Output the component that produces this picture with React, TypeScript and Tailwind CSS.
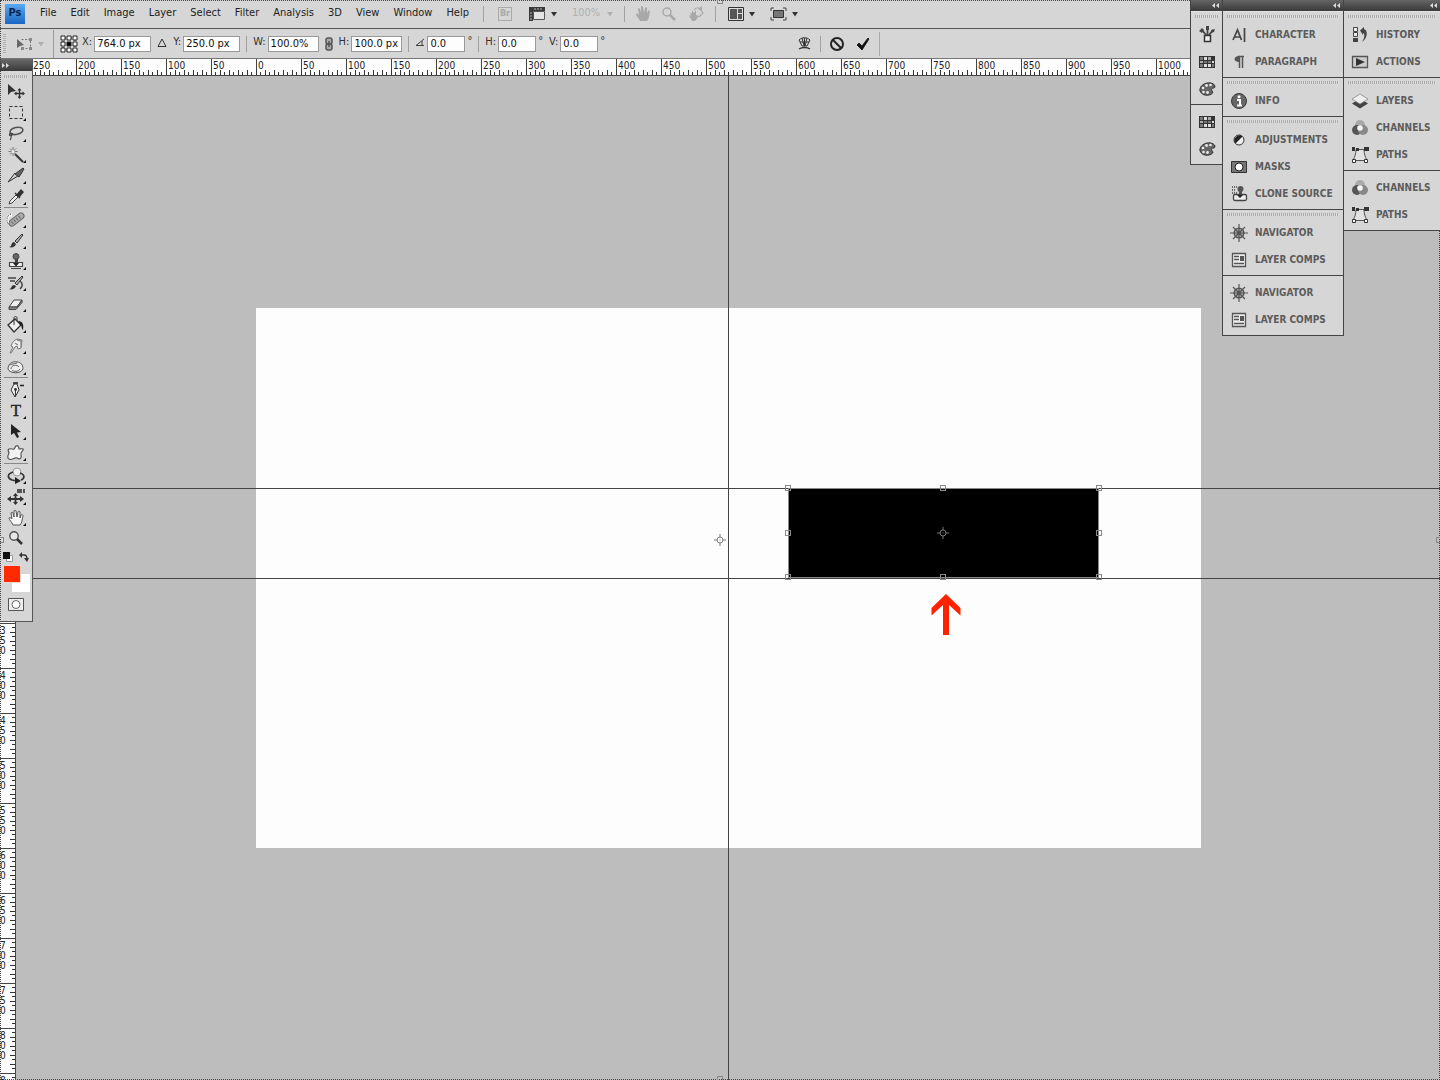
// App.tsx — image editor workspace: menu bar, transform options bar, rulers, toolbox, canvas and panel docks.
import type { ReactNode } from "react";

const MENUS = ["File", "Edit", "Image", "Layer", "Select", "Filter", "Analysis", "3D", "View", "Window", "Help"];

// Document units per major ruler division. At 90% zoom one division is 45px.
const RULER_STEP = 50;

function range(from: number, count: number) {
  return Array.from({ length: count }, (_, i) => Math.abs(from + i * RULER_STEP));
}

type Tool = { name: string; icon: ReactNode; single?: boolean };

const TOOL_GROUPS: Tool[][] = [
  [
    {
      name: "Move",
      single: true,
      icon: (
        <>
          <path d="M3 2v11l3-3 5-1z" fill="#333" />
          <path d="M14.500 7v9M10 11.500h9" stroke="#333" strokeWidth="1.400" />
          <path d="m14.500 6 2 2.500h-4zM14.500 17l2-2.500h-4zM9 11.500l2.500-2v4zM20 11.500l-2.500-2v4z" fill="#333" />
        </>
      ),
    },
    {
      name: "Rectangular Marquee",
      icon: <rect x="4.500" y="3.500" width="13" height="12" fill="none" stroke="#333" strokeDasharray="3 2" />,
    },
    {
      name: "Lasso",
      icon: (
        <>
          <ellipse cx="11.500" cy="7" rx="6.500" ry="3.500" transform="rotate(-12 11 7)" fill="none" stroke="#555" strokeWidth="1.600" />
          <path d="M6 9c-3 1-1 4 1 2s-1-2-1 0 1 3-1 5" fill="none" stroke="#444" strokeWidth="1.200" />
        </>
      ),
    },
    {
      name: "Magic Wand",
      icon: (
        <>
          <path d="m10 9 8 8" stroke="#333" strokeWidth="2" />
          <path d="M8 2v9M3.500 6.500h9M5 3.500l6 6M11 3.500l-6 6" stroke="#777" strokeWidth="1" />
          <circle cx="8" cy="6.500" r="1.500" fill="#eee" />
        </>
      ),
    },
    {
      name: "Slice",
      icon: (
        <>
          <path d="M3 16 10 7l3 3z" fill="#ccc" stroke="#333" />
          <path d="m10 8 8-6 1 1-5 8z" fill="#666" stroke="#333" />
        </>
      ),
    },
    {
      name: "Eyedropper",
      icon: (
        <>
          <path d="m4 17 1-3 6-6 2 2-6 6z" fill="#eee" stroke="#444" />
          <path d="m10 6 5 5M12 8l4-5 2 2-4 5z" fill="#333" stroke="#333" strokeWidth="1.500" />
        </>
      ),
    },
  ],
  [
    {
      name: "Spot Healing Brush",
      icon: (
        <>
          <path d="m7 13 9-7" stroke="#666" strokeWidth="7" strokeLinecap="round" />
          <path d="m7 13 9-7" stroke="#aaa" strokeWidth="5" strokeLinecap="round" />
          <path d="m7 13 9-7" stroke="#666" strokeWidth="3" strokeDasharray="1 2" />
          <path d="M7 5C3 5 1 9 3 13" fill="none" stroke="#fff" strokeWidth="2.500" />
          <path d="M6 4C2 5 1 10 3 14" fill="none" stroke="#333" strokeDasharray="1 1" />
        </>
      ),
    },
    {
      name: "Brush",
      icon: (
        <>
          <path d="m10 10 7-7 1 1-6 8z" fill="#aaa" stroke="#333" />
          <path d="M4 16c3 0 2-5 5-5l2 2c-1 3-4 4-7 3z" fill="#333" />
        </>
      ),
    },
    {
      name: "Clone Stamp",
      icon: (
        <>
          <circle cx="11" cy="4.500" r="3" fill="#666" stroke="#444" />
          <path d="M10 7h3v4h-3z" fill="#444" />
          <path d="M4.500 10.500h13v4h-13zM6 16.500h10" fill="#eee" stroke="#444" strokeWidth="1.200" />
          <path d="M8 11h6l-3 3.500z" fill="#222" />
        </>
      ),
    },
    {
      name: "History Brush",
      icon: (
        <>
          <path d="m10 10 7-7 1 1-6 8z" fill="#aaa" stroke="#333" />
          <path d="M4 16c3 0 2-4 5-4l2 1c-1 3-4 4-7 3z" fill="#333" />
          <path d="M3 5h8M5 8h5M15 8c3 2 3 5 0 8" fill="none" stroke="#444" strokeWidth="1.500" />
        </>
      ),
    },
    {
      name: "Eraser",
      icon: (
        <>
          <path d="m4 13 5-7h8l-5 7z" fill="#eee" stroke="#444" />
          <path d="M4 13v2.500h7l6-7V6l-5 7z" fill="#888" stroke="#444" />
        </>
      ),
    },
    {
      name: "Paint Bucket",
      icon: (
        <>
          <path d="m3 10 7-6 6 6-7 7z" fill="#eee" stroke="#333" strokeWidth="1.300" />
          <path d="M9 10V3c0-2 3-2 3 0v3" fill="none" stroke="#333" />
          <path d="M13 6c5 0 6 4 5 9-2-2-1-5-3-5z" fill="#222" />
        </>
      ),
    },
    {
      name: "Smudge",
      icon: (
        <>
          <path d="m5 17 3-6-2-1c1-3 3-6 6-7l5 1-1 8-3 1-1-3-2 1-4 6z" fill="#f0f0f0" stroke="#777" />
          <path d="m12 4 4 1v6M10 7l3 2" fill="none" stroke="#888" strokeWidth="1.400" />
        </>
      ),
    },
    {
      name: "Sponge",
      icon: (
        <>
          <path d="M3 12c0-5 4-8 9-7 4 0 6 3 6 7-2 5-13 5-15 0z" fill="#eee" stroke="#555" />
          <path d="M6 12c0-4 6-5 8-2M7 13c2 2 6 2 8-1M4 8l8-2" fill="none" stroke="#666" />
        </>
      ),
    },
  ],
  [
    {
      name: "Pen",
      icon: (
        <>
          <path d="m10 17-4-7 3-6h3l2 6z" fill="#eee" stroke="#333" />
          <path d="M10.500 16v-6" stroke="#333" />
          <circle cx="10.500" cy="9.500" r="1.400" fill="#333" />
          <path d="M8 3h5M15 5.500h4" stroke="#222" strokeWidth="1.600" />
        </>
      ),
    },
    {
      name: "Horizontal Type",
      icon: (
        <text x="11" y="15" textAnchor="middle" fontSize="17" fontFamily="Liberation Serif, serif" fill="#222" stroke="#222" strokeWidth="0.300">
          T
        </text>
      ),
    },
    { name: "Path Selection", icon: <path d="M6 2v11l3-2 3 5 2-1-2-4.500 4-.5z" fill="#222" /> },
    {
      name: "Custom Shape",
      icon: (
        <path
          d="M11 3c2-1 3 1 3 3 2 0 5-1 4 1s-3 3-2 5c1 3-1 5-4 3-3-1-5 3-8 1s0-5 0-6-2-3 0-4 4 1 5 0 1-2 2-3z"
          fill="#f2f2f2"
          stroke="#555"
          strokeWidth="1.200"
        />
      ),
    },
  ],
  [
    {
      name: "3D Rotate",
      icon: (
        <>
          <circle cx="12" cy="6" r="4" fill="#eee" stroke="#999" />
          <path d="M8 6c-6 2-6 6-1 8l5 1M15 7c6 2 4 6 1 7" fill="none" stroke="#333" strokeWidth="1.700" />
          <path d="m10 11 6 4-6 3z" fill="#222" />
        </>
      ),
    },
    {
      name: "3D Pan",
      icon: (
        <>
          <path d="M3 12h15M10.500 7v10" stroke="#333" strokeWidth="1.800" />
          <path d="m2 12 4-3v6zM19 12l-4-3v6zM8 9h5l-2.500-3zM8 15h5l-2.500 3z" fill="#333" />
          <path d="M12 2h5v4h-5zM18 2h2v4h-2z" fill="#555" />
        </>
      ),
    },
    {
      name: "Hand",
      icon: (
        <path
          d="M8 17C7 14 4 12 4 10c1-1 2 0 3 1L6 5c0-1 2-1 2 0l1 4V3c0-1 2-1 2 0l1 6 1-5c0-1 2-1 2 0v6l1-3c1-1 2 0 2 1-1 4-1 7-3 9z"
          fill="#f5f5f5"
          stroke="#555"
        />
      ),
    },
    {
      name: "Zoom",
      single: true,
      icon: (
        <>
          <circle cx="9" cy="7" r="4.200" fill="#e8e8e8" stroke="#555" strokeWidth="1.400" />
          <path d="m12 10 5 5" stroke="#333" strokeWidth="2.500" />
        </>
      ),
    },
  ],
];

const ICONS: Record<string, ReactNode> = {
  brushes: (
    <>
      <path d="M6.500 9.500h6v6h-6z" fill="#eee" stroke="#333" strokeWidth="1.500" />
      <path d="M8 9 4 4M9.500 9V3M11 9l4-5" stroke="#444" strokeWidth="1.800" />
      <path d="M1 5l3-3 2 2-2 3zM8 0h3v4H8zM13 4l4-1-1 3-3 1z" fill="#444" />
    </>
  ),
  swatches: (
    <>
      <path d="M1 3h16v12H1z" fill="#333" />
      <path d="M2 4h3v3H2zM6 8h3v2H6zM10 8h3v2h-3zM2 11h3v3H2zM14 11h2v3h-2z" fill="#777" />
      <path d="M6 4h3v3H6zM14 8h2v2h-2zM6 11h3v3H6zM10 11h3v3h-3z" fill="#ddd" />
      <path d="M10 4h3v3h-3zM2 8h3v2H2z" fill="#aaa" />
    </>
  ),
  color: (
    <>
      <path d="M2 11C1 6 7 2 13 3c4 1 5 4 3 5-3 0-3 2-1 4 0 3-10 6-13-1z" fill="#666" stroke="#333" />
      <g fill="#e8e8e8">
        <circle cx="5" cy="8" r="1.300" />
        <circle cx="8.500" cy="5.500" r="1.400" />
        <circle cx="12.500" cy="5" r="1.300" />
        <circle cx="5.500" cy="12" r="1.300" />
        <circle cx="9.500" cy="12.500" r="1.400" />
      </g>
    </>
  ),
  character: <path d="M3 14 7.500 4l4 10M4.500 11h6M14.500 2v14" fill="none" stroke="#444" strokeWidth="1.700" />,
  paragraph: (
    <>
      <path d="M9 3C3 3 3 9 9 9z" fill="#555" />
      <path d="M9.500 3v12M12.500 3v12M8 3.500h6" stroke="#555" strokeWidth="1.500" />
    </>
  ),
  info: (
    <>
      <circle cx="9" cy="9" r="7.500" fill="#666" stroke="#3a3a3a" />
      <path d="M7 8h3v5M7 13.500h5" fill="none" stroke="#fff" strokeWidth="2" />
      <circle cx="9" cy="4.800" r="1.500" fill="#fff" />
    </>
  ),
  adjustments: (
    <>
      <circle cx="9" cy="9" r="5" fill="#eee" stroke="#333" />
      <path d="M5.500 12.500a5 5 0 0 1 7-7z" fill="#222" />
    </>
  ),
  masks: (
    <>
      <path d="M1.500 3.500h15v11h-15z" fill="#777" stroke="#333" />
      <circle cx="9" cy="9" r="4" fill="#fff" stroke="#222" />
    </>
  ),
  clone: (
    <>
      <path d="M2 2h5M2 5h4M2 8h5" stroke="#444" strokeWidth="1.500" strokeDasharray="1 1" />
      <circle cx="10.500" cy="4" r="3" fill="#555" />
      <path d="M9 6h3v4H9z" fill="#555" />
      <rect x="3.500" y="9.500" width="13" height="6" rx="1.500" fill="#eee" stroke="#444" strokeWidth="1.300" />
      <path d="M7 10h6l-3 3z" fill="#222" />
    </>
  ),
  navigator: (
    <>
      <circle cx="9" cy="9" r="4.800" fill="#aaa" stroke="#555" strokeWidth="1.500" />
      <path d="M9 0v18M0 9h18M3 3l12 12M15 3 3 15" stroke="#555" strokeWidth="1.200" />
      <circle cx="9" cy="9" r="2" fill="#555" />
    </>
  ),
  comps: (
    <>
      <path d="M2.500 2.500h13v13h-13z" fill="#eee" stroke="#555" strokeWidth="1.300" />
      <path d="M4 5.500h5M4 8.500h5M4 12.500h10" stroke="#555" strokeWidth="1.300" />
      <path d="M10 5h4v5h-4z" fill="#555" />
    </>
  ),
  history: (
    <>
      <path d="M2.500 1.500h4v4h-4zM2.500 6.500h4v4h-4z" fill="#eee" stroke="#444" />
      <path d="M2 12h5v4H2z" fill="#444" />
      <path d="M9 4.500 13 1v2c4 1 4 9-2 13 3-5 3-8 1-9v2z" fill="#444" />
    </>
  ),
  actions: (
    <>
      <path d="M1.500 3.500h15v11h-15z" fill="#ccc" stroke="#555" strokeWidth="1.300" />
      <path d="m5 5 9 4-9 4z" fill="#333" />
    </>
  ),
  layers: (
    <>
      <path d="m1 11.500 8-5 8 5-8 5z" fill="#444" />
      <path d="m1 7 8-5 8 5-8 5z" fill="#eee" stroke="#888" strokeWidth="0.800" />
    </>
  ),
  channels: (
    <>
      <circle cx="9" cy="6" r="5" fill="#aaa" />
      <circle cx="6" cy="11" r="5" fill="#555" />
      <circle cx="12" cy="11" r="5" fill="#888" />
      <circle cx="9" cy="9" r="2.800" fill="#f5f5f5" />
    </>
  ),
  paths: (
    <>
      <path d="M5 3.500h8c0 4 1 7 3 11H2c2-4 3-7 3-11z" fill="#e2e2e2" stroke="#555" />
      <path d="M1 1h3v4H1zM5 2h3v3H5zM13 1h5v4h-5z" fill="#333" />
      <path d="M1.500 13.500h3v3h-3zM13.500 13.500h3v3h-3z" fill="#fff" stroke="#333" />
    </>
  ),
};

type Panel = { icon: string; label: string };
type PanelGroup = { grip?: boolean; panels: Panel[] };

const ICON_DOCK: PanelGroup[] = [
  {
    grip: true,
    panels: [
      { icon: "brushes", label: "Brushes" },
      { icon: "swatches", label: "Swatches" },
      { icon: "color", label: "Color" },
    ],
  },
  {
    panels: [
      { icon: "swatches", label: "Swatches" },
      { icon: "color", label: "Color" },
    ],
  },
];

const MIDDLE_DOCK: PanelGroup[] = [
  {
    grip: true,
    panels: [
      { icon: "character", label: "CHARACTER" },
      { icon: "paragraph", label: "PARAGRAPH" },
    ],
  },
  { grip: true, panels: [{ icon: "info", label: "INFO" }] },
  {
    grip: true,
    panels: [
      { icon: "adjustments", label: "ADJUSTMENTS" },
      { icon: "masks", label: "MASKS" },
      { icon: "clone", label: "CLONE SOURCE" },
    ],
  },
  {
    grip: true,
    panels: [
      { icon: "navigator", label: "NAVIGATOR" },
      { icon: "comps", label: "LAYER COMPS" },
    ],
  },
  {
    panels: [
      { icon: "navigator", label: "NAVIGATOR" },
      { icon: "comps", label: "LAYER COMPS" },
    ],
  },
];

const RIGHT_DOCK: PanelGroup[] = [
  {
    grip: true,
    panels: [
      { icon: "history", label: "HISTORY" },
      { icon: "actions", label: "ACTIONS" },
    ],
  },
  {
    grip: true,
    panels: [
      { icon: "layers", label: "LAYERS" },
      { icon: "channels", label: "CHANNELS" },
      { icon: "paths", label: "PATHS" },
    ],
  },
  {
    panels: [
      { icon: "channels", label: "CHANNELS" },
      { icon: "paths", label: "PATHS" },
    ],
  },
];

function Caret({ faded }: { faded?: boolean }) {
  return (
    <svg width="8" height="6" viewBox="0 0 8 6" className={faded ? "text-[#b0b0b0]" : "text-[#333]"}>
      <path d="M1 1h6L4 5.500z" fill="currentColor" />
    </svg>
  );
}

function Divider() {
  return <span className="h-4 w-px shrink-0 bg-[#a0a0a0]" />;
}

function MenuBar() {
  return (
    <header className="flex h-[29px] shrink-0 items-center border-b border-[#555] bg-[#d6d6d6] pb-px pl-[5px] text-[11px] text-[#222]">
      <span className="flex size-5 items-center justify-center bg-linear-to-b from-[#5aa9f0] to-[#1b66c4] text-[11px] font-bold text-[#06264f]">
        Ps
      </span>
      <nav className="ml-[15px] flex gap-3.5">
        {MENUS.map((m) => (
          <button key={m} type="button">
            {m}
          </button>
        ))}
      </nav>
      <div className="ml-3.5 flex items-center">
        <Divider />
        <button type="button" aria-label="Launch Bridge" className="ml-3.5 flex size-3.5 items-center justify-center border border-[#aaa] text-[9px] font-bold text-[#aaa]">
          Br
        </button>
        <button type="button" aria-label="View extras" className="ml-4 flex items-center gap-1">
          <svg width="18" height="16" viewBox="0 0 18 16">
            <path d="M1 1h16v4H5v10H1z" fill="#3a3a3a" />
            <path d="M5.500 5.500h11v8h-11z" fill="#e4e4e4" stroke="#555" />
            <path d="M7 2v2M10 2v2M13 2v2M2 7h2M2 10h2M2 13h2" stroke="#bbb" />
          </svg>
          <Caret />
        </button>
        <button type="button" className="ml-3.5 flex items-center gap-1.5 text-[#b0b0b0]">
          100% <Caret faded />
        </button>
        <span className="ml-2.5 flex items-center gap-2.5">
          <Divider />
          <button type="button" aria-label="Hand">
            <svg width="16" height="16" viewBox="3 2 16 16">
              <path d="M8 17C7 14 4 12 4 10c1-1 2 0 3 1L6 5c0-1 2-1 2 0l1 4V3c0-1 2-1 2 0l1 6 1-5c0-1 2-1 2 0v6l1-3c1-1 2 0 2 1-1 4-1 7-3 9z" fill="#a8a8a8" />
            </svg>
          </button>
          <button type="button" aria-label="Zoom">
            <svg width="16" height="16" viewBox="0 0 16 16" fill="none" stroke="#a8a8a8">
              <circle cx="6" cy="6" r="4" strokeWidth="1.500" />
              <path d="m9 9 5 5" strokeWidth="2.500" />
            </svg>
          </button>
          <button type="button" aria-label="Rotate view">
            <svg width="18" height="16" viewBox="0 0 18 16">
              <path d="M5 15C4 12 2 11 2 9l2 1-1-4 2 2V4l2 3 2-3v5l3 1-4 5z" fill="#a8a8a8" />
              <path d="M7 4c2-3 5-3 7 0l2 3-4 4" fill="none" stroke="#a8a8a8" strokeWidth="1.200" />
              <path d="m11 3 4-3v5z" fill="#a8a8a8" />
            </svg>
          </button>
          <Divider />
        </span>
        <button type="button" aria-label="Arrange documents" className="ml-3 flex items-center gap-1">
          <svg width="16" height="14" viewBox="0 0 16 14">
            <path d="M.5.5h15v13H.5z" fill="#ddd" stroke="#333" />
            <path d="M2 2h7v10H2zM10 2h4v4h-4zM10 7h4v5h-4z" fill="#555" />
          </svg>
          <Caret />
        </button>
        <button type="button" aria-label="Screen mode" className="ml-3.5 flex items-center gap-1">
          <svg width="17" height="14" viewBox="0 0 17 14">
            <path d="M1 4V1h3M13 1h3v3M16 10v3h-3M4 13H1v-3" fill="none" stroke="#444" />
            <path d="M3.500 3.500h10v7h-10z" fill="#777" stroke="#333" />
          </svg>
          <Caret />
        </button>
      </div>
    </header>
  );
}

function Field({ id, label, value, width, unit }: { id: string; label: ReactNode; value: string; width: string; unit?: string }) {
  return (
    <div className="flex items-center gap-0.5">
      <label htmlFor={id} className="-mt-0.5 min-w-2">
        {label}
      </label>
      <input id={id} defaultValue={value} className={`h-4 border border-[#999] bg-[#fdfdfd] px-0.5 pt-0.5 text-[#111] outline-none ${width}`} />
      {unit && <span className="-mt-1">{unit}</span>}
    </div>
  );
}

function OptionsBar() {
  return (
    <div className="flex h-[30px] shrink-0 items-center border-b border-[#777] bg-[#d6d6d6] pl-[3px] text-[11px] text-[#333]">
      <span className="h-5 w-[3px] bg-[repeating-linear-gradient(#aaa_0_1px,#ddd_1px_2px)]" />
      <button type="button" aria-label="Tool presets" className="ml-2.5 flex items-center gap-1">
        <svg width="17" height="14" viewBox="0 0 17 14">
          <path d="M5.500 2.500h9v9h-9" fill="none" stroke="#777" strokeDasharray="2 1.500" />
          <path d="M1 2v9l3-2 4-1z" fill="#666" />
          <path d="M13 1h3v3h-3zM13 10h3v3h-3zM5 10h3v3H5z" fill="#888" />
        </svg>
        <Caret faded />
      </button>
      <span className="ml-2 h-7 w-px bg-[#999]" />
      <button type="button" aria-label="Reference point location" className="ml-1.5">
        <svg width="18" height="18" viewBox="0 0 18 18" fill="#fff" stroke="#222">
          <path d="M3 3h12v12H3z" fill="none" strokeDasharray="1 1" />
          <path d="M1 1h4v4H1zM7 1h4v4H7zM13 1h4v4h-4zM1 7h4v4H1zM13 7h4v4h-4zM1 13h4v4H1zM7 13h4v4H7zM13 13h4v4h-4z" />
          <path d="M7 7h4v4H7z" fill="#000" />
        </svg>
      </button>
      <div className="ml-1 flex items-center gap-1.5">
        <Field id="pos-x" label="X:" value="764.0 px" width="w-[57px]" />
        <svg width="10" height="10" viewBox="0 0 10 10" className="-mt-0.5">
          <path d="M1 8.500h8L5 1z" fill="none" stroke="#333" />
        </svg>
        <Field id="pos-y" label="Y:" value="250.0 px" width="w-[57px]" />
        <Divider />
        <Field id="width" label="W:" value="100.0%" width="w-[51px]" />
        <button type="button" aria-label="Maintain aspect ratio">
          <svg width="8" height="14" viewBox="0 0 8 14" fill="none" stroke="#555" strokeWidth="1.500">
            <rect x="1" y="1" width="6" height="6" rx="2" fill="#aaa" />
            <rect x="1" y="7" width="6" height="6" rx="2" fill="#aaa" />
            <path d="M4 4v6" />
          </svg>
        </button>
        <Field id="height" label="H:" value="100.0 px" width="w-[51px]" />
        <Divider />
        <Field
          id="angle"
          label={
            <svg width="10" height="9" viewBox="0 0 10 9" role="img" aria-label="Rotation">
              <path d="M9 1 1 7.500h8M7 3v4" fill="none" stroke="#444" />
            </svg>
          }
          value="0.0"
          width="w-[38px]"
          unit="°"
        />
        <Divider />
        <Field id="skew-h" label="H:" value="0.0" width="w-[38px]" unit="°" />
        <Field id="skew-v" label="V:" value="0.0" width="w-[38px]" unit="°" />
      </div>
      <div className="ml-48 flex items-center gap-2">
        <button type="button" aria-label="Warp">
          <svg width="15" height="15" viewBox="0 0 15 15" fill="none" stroke="#333">
            <path d="M2 4c3-3 8-3 11 0l-3 6H5zM3 6h9M5 2l2 8M10 2 8 10M7.500 2v8" />
            <path d="M2 13c3-2 8-2 11 0" strokeWidth="1.500" />
          </svg>
        </button>
        <Divider />
        <button type="button" aria-label="Cancel transform">
          <svg width="16" height="16" viewBox="0 0 16 16" fill="none" stroke="#222" strokeWidth="2">
            <circle cx="8" cy="8" r="6" />
            <path d="m4 4 8 8" />
          </svg>
        </button>
        <button type="button" aria-label="Commit transform" className="ml-0.5">
          <svg width="16" height="16" viewBox="0 0 16 16">
            <path d="m2 9 2-2 3 3 6-8 1 1-7 11z" fill="#111" stroke="#111" strokeWidth="0.800" />
          </svg>
        </button>
        <span className="h-6 w-px bg-[#aaa]" />
      </div>
    </div>
  );
}

function HorizontalRuler() {
  return (
    <div className="flex h-[17px] shrink-0 overflow-hidden border-b border-[#444] bg-[#fdfdfd] pl-[31px] text-[10px] leading-3 text-[#222]">
      {range(-250, 26).map((n, i) => (
        <div key={i} className="flex w-[45px] shrink-0 flex-col justify-between">
          <span className="h-[11px] border-l border-[#444] pt-px pl-px">{n}</span>
          <svg width="45" height="5" viewBox="0 0 45 5" shapeRendering="crispEdges" className="block">
            <path d="M.5 0v5M9.500 0v5M18.500 0v5M27.500 0v5M36.500 0v5M4.500 2v3M13.500 2v3M22.500 2v3M31.500 2v3M40.500 2v3" stroke="#333" />
          </svg>
        </div>
      ))}
    </div>
  );
}

function VerticalRuler() {
  return (
    <div className="w-4 shrink-0 overflow-hidden border-r border-[#444] bg-[#fdfdfd] pt-[7px] text-[10px] leading-[10px] text-[#222]">
      {range(-250, 23).map((n, i) => (
        <div key={i} className="flex h-[45px] justify-between border-t border-[#444]">
          <span className="flex w-[6px] flex-col pt-0.5">
            {String(n)
              .split("")
              .map((d, j) => (
                <span key={j}>{d}</span>
              ))}
          </span>
          <svg width="5" height="44" viewBox="0 1 5 44" shapeRendering="crispEdges">
            <path d="M0 9.500h5M0 18.500h5M0 27.500h5M0 36.500h5M2 4.500h3M2 13.500h3M2 22.500h3M2 31.500h3M2 40.500h3" stroke="#333" />
          </svg>
        </div>
      ))}
    </div>
  );
}

function Crosshair() {
  return (
    <svg width="12" height="12" viewBox="0 0 12 12" fill="none" stroke="#777">
      <circle cx="6" cy="6" r="3" />
      <path d="M6 0v3M6 9v3M0 6h3M9 6h3M6 5.500v1" />
    </svg>
  );
}

const HANDLE = "absolute size-[6px] border border-[#888]";

function TransformBox() {
  return (
    <div className="absolute top-[180px] left-[532px] h-[90px] w-[311px] border border-[#888] bg-black">
      <span className={`${HANDLE} -top-1 -left-1`} />
      <span className={`${HANDLE} -top-1 left-1/2 -ml-[3px]`} />
      <span className={`${HANDLE} -top-1 -right-1`} />
      <span className={`${HANDLE} top-1/2 -left-1 -mt-[3px]`} />
      <span className={`${HANDLE} top-1/2 -right-1 -mt-[3px]`} />
      <span className={`${HANDLE} -bottom-[3px] -left-1`} />
      <span className={`${HANDLE} -bottom-[3px] left-1/2 -ml-[3px]`} />
      <span className={`${HANDLE} -right-1 -bottom-[3px]`} />
      <span className="absolute inset-0 flex items-center justify-center">
        <Crosshair />
      </span>
    </div>
  );
}

function Workspace() {
  return (
    <main className="relative flex flex-1 items-center justify-center overflow-hidden bg-[#bdbdbd]">
      <div className="relative h-[540px] w-[945px] shrink-0 bg-[#fdfdfd]">
        <svg width="30" height="42" viewBox="0 0 30 42" className="absolute top-[286px] left-[675px]">
          <path d="M15 0 29.500 14v7.500L18 11v30h-6V11L.5 21.500V14z" fill="#ff2200" />
        </svg>
      </div>
      <span className="absolute inset-y-0 left-1/2 w-px bg-[#444]" />
      <span className="absolute inset-x-0 top-1/2 h-px bg-[#444]" />
      <span className="absolute inset-x-0 top-[calc(50%-90px)] h-px bg-[#444]" />
      <div className="absolute h-[540px] w-[945px]">
        <TransformBox />
      </div>
    </main>
  );
}

function Toolbox() {
  return (
    <aside className="absolute top-[59px] left-0 w-[33px] border-r border-b border-[#555] bg-[#d6d6d6] pb-2.5">
      <div className="flex h-3 items-center bg-linear-to-b from-[#6a6a6a] to-[#3a3a3a] pl-0.5">
        <svg width="8" height="5" viewBox="0 0 8 5" fill="#ddd">
          <path d="M0 0l3 2.500L0 5zM4 0l3 2.500L4 5z" />
        </svg>
      </div>
      <div className="flex h-2.5 items-center px-1">
        <span className="h-[3px] w-full bg-[repeating-linear-gradient(90deg,#aaa_0_1px,#ddd_1px_2px)]" />
      </div>
      {TOOL_GROUPS.map((group, i) => (
        <div key={i}>
          {i > 0 && <div className="mx-1 mb-px h-px bg-[#888]" />}
          {group.map((t) => (
            <button key={t.name} type="button" aria-label={t.name} className="flex h-[21px] w-full items-center pl-[5px]">
              <svg width="22" height="20" viewBox="0 0 22 20">
                {t.icon}
                {!t.single && <path d="M21 15v3h-3z" fill="#111" />}
              </svg>
            </button>
          ))}
        </div>
      ))}
      <div className="flex h-[15px] items-center justify-between px-[3px]">
        <button type="button" aria-label="Default colors">
          <svg width="10" height="10" viewBox="0 0 10 10">
            <path d="M3.500 3.500h6v6h-6z" fill="#fff" stroke="#999" />
            <path d="M0 0h7v7H0z" fill="#111" />
          </svg>
        </button>
        <button type="button" aria-label="Switch colors">
          <svg width="10" height="10" viewBox="0 0 10 10">
            <path d="M2 3h3c2 0 3 1 3 4" fill="none" stroke="#333" strokeWidth="1.400" />
            <path d="m0 3 3-3v6zM5 6h5l-2 4z" fill="#333" />
          </svg>
        </button>
      </div>
      <div className="relative h-7">
        <button type="button" aria-label="Background color" className="absolute top-[10px] left-3 size-[18px] bg-white" />
        <button type="button" aria-label="Foreground color" className="absolute top-px left-[3px] size-[18px] border border-[#e8d8d0] bg-[#ff2a00]" />
      </div>
      <button type="button" aria-label="Edit in Quick Mask mode" className="mt-1.5 ml-2 block">
        <svg width="16" height="13" viewBox="0 0 16 13">
          <path d="M.5.5h15v12H.5z" fill="#eee" stroke="#555" />
          <circle cx="8" cy="6.500" r="4" fill="#fff" stroke="#666" />
        </svg>
      </button>
    </aside>
  );
}

function Dock({ groups, width, iconsOnly }: { groups: PanelGroup[]; width: string; iconsOnly?: boolean }) {
  return (
    <section className={`border-l border-[#444] ${width}`}>
      <div className="flex h-3 items-center justify-end border-b border-[#e4e4e4] bg-linear-to-b from-[#666] to-[#3a3a3a] pr-0.5">
        <svg width="8" height="5" viewBox="0 0 8 5" fill="#ddd">
          <path d="M3 0 0 2.500 3 5zM7 0 4 2.500 7 5z" />
        </svg>
      </div>
      {groups.map((g, i) => (
        <div key={i} className={`border-b border-[#444] bg-[#d6d6d6] pb-0.5 ${g.grip ? "" : "pt-[3px]"}`}>
          {g.grip && (
            <div className="flex h-[9px] items-center px-1">
              <span className="h-[3px] w-full bg-[repeating-linear-gradient(90deg,#aaa_0_1px,#ddd_1px_2px)]" />
            </div>
          )}
          {g.panels.map((p) => (
            <button
              key={p.label}
              type="button"
              aria-label={p.label}
              className="flex h-[27px] w-full items-center gap-[7px] pl-[7px] text-[10px] font-bold whitespace-nowrap text-[#5c5c5c]"
            >
              <svg width="18" height="18" viewBox="0 0 18 18" className="shrink-0">
                {ICONS[p.icon]}
              </svg>
              {!iconsOnly && p.label}
            </button>
          ))}
        </div>
      ))}
    </section>
  );
}

// Free-transform bounds of the whole window, with its edge handles and centre point.
function OuterBounds() {
  return (
    <div className="pointer-events-none absolute inset-0 border border-dotted border-[#444]">
      <span className={`${HANDLE} -top-[3px] left-1/2 -ml-[3px]`} />
      <span className={`${HANDLE} -bottom-[3px] left-1/2 -ml-[3px]`} />
      <span className={`${HANDLE} top-1/2 -left-[3px] -mt-[3px]`} />
      <span className={`${HANDLE} top-1/2 -right-[3px] -mt-[3px]`} />
      <span className="absolute inset-0 flex items-center justify-center">
        <Crosshair />
      </span>
    </div>
  );
}

export default function App() {
  return (
    <div className="relative flex h-screen flex-col overflow-hidden bg-[#bdbdbd] font-['DejaVu_Sans_Condensed','Noto_Sans',sans-serif]">
      <MenuBar />
      <OptionsBar />
      <HorizontalRuler />
      <div className="flex min-h-0 flex-1">
        <VerticalRuler />
        <Workspace />
      </div>
      <Toolbox />
      <OuterBounds />
      <div className="absolute top-0 right-0 flex items-start">
        <Dock groups={ICON_DOCK} width="w-8" iconsOnly />
        <Dock groups={MIDDLE_DOCK} width="-mr-px w-[122px] border-r" />
        <Dock groups={RIGHT_DOCK} width="w-[97px]" />
      </div>
    </div>
  );
}
